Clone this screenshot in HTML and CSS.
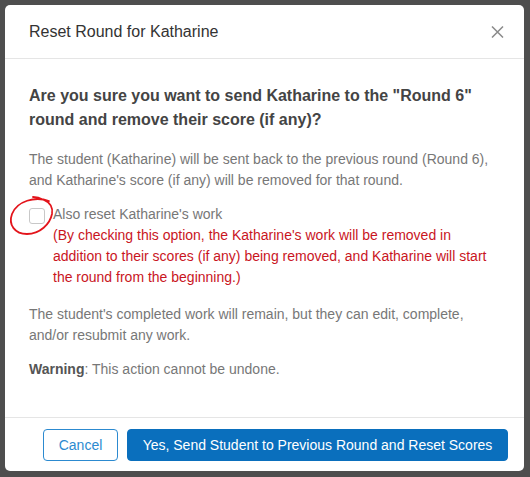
FILE: index.html
```html
<!DOCTYPE html>
<html>
<head>
<meta charset="utf-8">
<link rel="stylesheet" href="styles.css">
</head>
<body>
<div class="backdrop">
  <div class="modal">
    <div class="modal-header">
      <h1 class="modal-title">Reset Round for Katharine</h1>
      <button class="close" aria-label="Close">
        <svg width="13" height="12" viewBox="0 0 13 12"><path d="M1 0.5 L12 11.5 M12 0.5 L1 11.5" stroke="#8a8a8a" stroke-width="1.5" fill="none"/></svg>
      </button>
    </div>
    <div class="modal-body">
      <h2 class="question">Are you sure you want to send Katharine to the "Round 6" round and remove their score (if any)?</h2>
      <p class="text">The student (Katharine) will be sent back to the previous round (Round 6), and Katharine's score (if any) will be removed for that round.</p>
      <div class="check-row">
        <span class="checkbox"></span>
        <svg class="annotation" width="50" height="44" viewBox="0 0 50 44"><path d="M42 6 C28 1 10 6 5 19 C1 30 8 39 20 39 C33 39 43 29 45 19 C46 13 44 8 37 5 C33 3 29 2 26 2" stroke="#e3141b" stroke-width="1.8" fill="none" stroke-linecap="round"/></svg>
        <div class="check-text">
          <div class="check-label">Also reset Katharine's work</div>
          <div class="check-note">(By checking this option, the Katharine's work will be removed in addition to their scores (if any) being removed, and Katharine will start the round from the beginning.)</div>
        </div>
      </div>
      <p class="text">The student's completed work will remain, but they can edit, complete, and/or resubmit any work.</p>
      <p class="text"><strong class="warn">Warning</strong>: This action cannot be undone.</p>
    </div>
    <div class="modal-footer">
      <button class="btn btn-outline">Cancel</button>
      <button class="btn btn-primary">Yes, Send Student to Previous Round and Reset Scores</button>
    </div>
  </div>
</div>
</body>
</html>
```

FILE: styles.css
```css
html, body {
  margin: 0;
  padding: 0;
}
body {
  width: 530px;
  height: 477px;
  background: #4e4e4e;
  font-family: "Liberation Sans", Arial, sans-serif;
  overflow: hidden;
}
.backdrop {
  padding: 5px 6px 6px 5px;
}
.modal {
  background: #fff;
  border-radius: 5px;
  height: 466px;
  display: flex;
  flex-direction: column;
}
.modal-header {
  height: 54px;
  box-sizing: border-box;
  border-bottom: 1px solid #e5e5e5;
  display: flex;
  align-items: center;
  justify-content: space-between;
  padding: 0 20px 0 24px;
}
.modal-title {
  margin: 0;
  font-size: 16px;
  font-weight: normal;
  color: #333;
  line-height: 20px;
}
.close {
  border: 0;
  background: none;
  padding: 0;
  width: 13px;
  height: 12px;
  display: flex;
}
.modal-body {
  flex: 1;
  padding: 25px 24px 0 24px;
}
.question {
  margin: 0 0 17px;
  font-size: 16px;
  line-height: 24px;
  font-weight: bold;
  color: #444;
}
.text {
  margin: 0 0 13px;
  font-size: 14px;
  line-height: 21px;
  color: #777;
}
.warn {
  color: #555;
  font-weight: bold;
}
.check-row {
  position: relative;
  display: flex;
  align-items: flex-start;
  gap: 8px;
  margin: 12px 0 16px;
}
.checkbox {
  flex: none;
  width: 14px;
  height: 14px;
  margin-top: 4px;
  border: 1px solid #c8c8c8;
  border-radius: 3px;
  background: #fff;
}
.annotation {
  position: absolute;
  left: -22px;
  top: -9px;
}
.check-text {
  font-size: 14px;
  line-height: 21px;
}
.check-label {
  color: #777;
}
.check-note {
  color: #c9151e;
}
.modal-footer {
  height: 54px;
  box-sizing: border-box;
  border-top: 1px solid #e5e5e5;
  display: flex;
  align-items: center;
  justify-content: flex-end;
  gap: 9px;
  padding: 0 16px;
}
.btn {
  height: 32px;
  font-family: "Liberation Sans", Arial, sans-serif;
  font-size: 14px;
  border-radius: 4px;
  padding: 0;
  white-space: nowrap;
  cursor: pointer;
}
.btn-outline {
  width: 75px;
  background: #fff;
  border: 1px solid #2c8ad0;
  color: #2c8ad0;
}
.btn-primary {
  width: 381px;
  background: #0a6fbd;
  border: 1px solid #0a6fbd;
  color: #fff;
}
```
